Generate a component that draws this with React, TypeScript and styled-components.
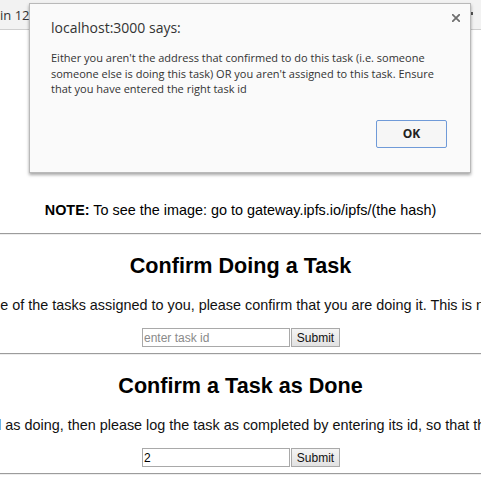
import React from "react";
import styled, { createGlobalStyle } from "styled-components";

const Global = createGlobalStyle`
  html, body { margin: 0; padding: 0; background: #ffffff; }
  body { font-family: "Liberation Sans", Arial, sans-serif; color: #000; overflow: hidden; }
`;

const Page = styled.div`
  position: relative;
  width: 481px;
  height: 482px;
  overflow: hidden;
  background: #fff;
`;

const TopStrip = styled.div`
  height: 29px;
  background: #f2f2f2;
  border-bottom: 1px solid #cfcfcf;
  display: flex;
  align-items: center;
  justify-content: space-between;
  font-family: "Open Sans", "Noto Sans", sans-serif;
  font-size: 13px;
  color: #333;
  white-space: nowrap;
`;

const StripText = styled.span`
  padding-top: 1px;
`;

const StripMark = styled.span`
  width: 3px;
  height: 3px;
  margin-right: 8px;
  margin-top: -2px;
  background: #555;
`;

const Content = styled.main`
  padding-top: 172px;
`;

const Note = styled.p`
  margin: 0 0 15px;
  font-size: 14.4px;
  line-height: 16px;
  text-align: center;
  white-space: nowrap;
`;

const Rule = styled.hr`
  margin: 0;
  height: 0;
  border: none;
  border-top: 1px solid #9c9c9c;
  border-bottom: 1px solid #eeeeee;
`;

const Section = styled.section`
  display: flex;
  flex-direction: column;
  align-items: center;
  padding: 18px 0 6px;
`;

const Title = styled.h2`
  margin: 0 0 19px;
  font-size: 21.6px;
  font-weight: bold;
  line-height: 25px;
`;

const Lead = styled.p`
  margin: 0 0 14.5px;
  width: 481px;
  display: flex;
  justify-content: center;
  font-size: 14.4px;
  line-height: 16.5px;
  color: #111;
  white-space: nowrap;
`;

const LeadText = styled.span`
  flex: none;
`;

const Form = styled.form`
  display: flex;
  height: 19px;
  margin-left: 1px;
`;

const IdInput = styled.input`
  box-sizing: border-box;
  width: 148px;
  height: 19px;
  margin: 0 1px 0 0;
  padding: 0 1px;
  border: 1px solid #a9a9a9;
  font-family: "Liberation Sans", Arial, sans-serif;
  font-size: 12px;
  color: #000;
  background: #fff;
  &::placeholder { color: #8a8a8a; }
`;

const SubmitButton = styled.button`
  box-sizing: border-box;
  width: 49px;
  height: 19px;
  padding: 0;
  border: 1px solid #a9a9a9;
  border-radius: 0;
  background: linear-gradient(#f4f4f4, #e2e2e2);
  font-family: "Liberation Sans", Arial, sans-serif;
  font-size: 12px;
  color: #111;
`;

const Dialog = styled.div`
  position: absolute;
  left: 29px;
  top: 3px;
  box-sizing: border-box;
  width: 442px;
  height: 170px;
  background: #fafafa;
  border: 1px solid #b9b9b9;
  box-shadow: 0 2px 3px rgba(0, 0, 0, 0.35);
  font-family: "Open Sans", "Noto Sans", sans-serif;
  color: #333;
  display: flex;
  flex-direction: column;
  padding: 14px 22px 0 21px;
`;

const Close = styled.svg`
  position: absolute;
  right: 10px;
  top: 10px;
  width: 8px;
  height: 8px;
`;

const DialogTitle = styled.div`
  font-size: 14px;
  line-height: 20px;
  color: #333;
`;

const Message = styled.div`
  margin-top: 12px;
  font-size: 11px;
  line-height: 15.5px;
  color: #333;
  white-space: nowrap;
`;

const Actions = styled.div`
  display: flex;
  justify-content: flex-end;
  margin-top: 23px;
  padding-right: 1px;
`;

const OkButton = styled.button`
  box-sizing: border-box;
  width: 71px;
  height: 28px;
  border: 1px solid #6f9ad8;
  border-radius: 2px;
  background: #f6f6f6;
  font-family: "Open Sans", "Noto Sans", sans-serif;
  font-weight: bold;
  font-size: 12px;
  color: #222;
`;

export default function App() {
  return (
    <>
      <Global />
      <Page>
        <TopStrip>
          <StripText>in 12-</StripText>
          <StripMark />
        </TopStrip>
        <Content>
          <Note>
            <b>NOTE:</b> To see the image: go to gateway.ipfs.io/ipfs/(the hash)
          </Note>
          <Rule />
          <Section>
            <Title>Confirm Doing a Task</Title>
            <Lead>
              <LeadText>
                Once you have started one of the tasks assigned to you, please confirm that you are doing it. This is necessary for the payment
              </LeadText>
            </Lead>
            <Form onSubmit={(e) => e.preventDefault()}>
              <IdInput placeholder="enter task id" />
              <SubmitButton type="submit">Submit</SubmitButton>
            </Form>
          </Section>
          <Rule />
          <Section>
            <Title>Confirm a Task as Done</Title>
            <Lead>
              <LeadText>
                If you have finished a task that you marked as doing, then please log the task as completed by entering its id, so that the employer can pay you for the work done
              </LeadText>
            </Lead>
            <Form onSubmit={(e) => e.preventDefault()}>
              <IdInput defaultValue="2" />
              <SubmitButton type="submit">Submit</SubmitButton>
            </Form>
          </Section>
          <Rule />
        </Content>
        <Dialog role="alertdialog">
          <Close viewBox="0 0 8 8" aria-label="close">
            <path d="M0.8 0.8 L7.2 7.2 M7.2 0.8 L0.8 7.2" stroke="#6f6f6f" strokeWidth="1.8" strokeLinecap="square" />
          </Close>
          <DialogTitle>localhost:3000 says:</DialogTitle>
          <Message>
            Either you aren't the address that confirmed to do this task (i.e. someone
            <br />
            someone else is doing this task) OR you aren't assigned to this task. Ensure
            <br />
            that you have entered the right task id
          </Message>
          <Actions>
            <OkButton>OK</OkButton>
          </Actions>
        </Dialog>
      </Page>
    </>
  );
}
